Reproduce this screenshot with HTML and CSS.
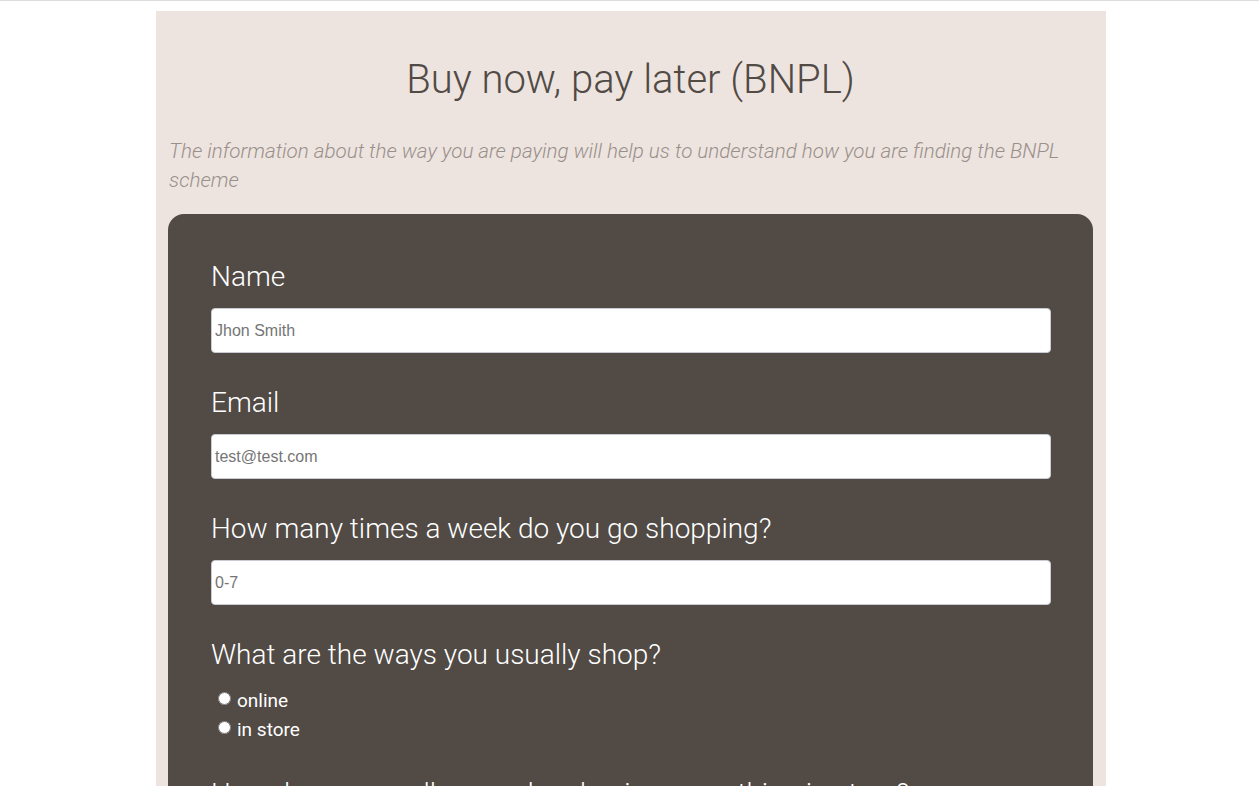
FILE: index.html
```html
<!DOCTYPE html>
<html lang="en">
<head>
<meta charset="utf-8">
<title>Buy now, pay later (BNPL)</title>
<link rel="stylesheet" href="styles.css">
</head>
<body>
<div class="topline"></div>
<main class="container">
  <h1 class="title">Buy now, pay later (BNPL)</h1>
  <p class="description">The information about the way you are paying will help us to understand how you are finding the BNPL scheme</p>
  <form class="survey">
    <div class="field">
      <label class="label" for="name">Name</label>
      <input class="input" id="name" type="text" placeholder="Jhon Smith">
    </div>
    <div class="field">
      <label class="label" for="email">Email</label>
      <input class="input" id="email" type="email" placeholder="test@test.com">
    </div>
    <div class="field">
      <label class="label" for="times">How many times a week do you go shopping?</label>
      <input class="input" id="times" type="number" placeholder="0-7">
    </div>
    <div class="field">
      <p class="label">What are the ways you usually shop?</p>
      <div class="options">
        <label class="option"><input type="radio" name="ways" class="radio">online</label>
        <label class="option"><input type="radio" name="ways" class="radio">in store</label>
      </div>
    </div>
    <div class="field">
      <p class="label">How do you usually pay when buying something in store?</p>
    </div>
  </form>
</main>
</body>
</html>
```
FILE: styles.css
```css
html, body {
  margin: 0;
  padding: 0;
  background: #ffffff;
}
body {
  font-family: Roboto, "Liberation Sans", sans-serif;
  padding-left: 3px;
}
.topline {
  height: 1px;
  background: #dddddd;
  margin-left: -3px;
}
.container {
  max-width: 950px;
  margin: 10px auto 0;
  background: #ede4df;
  padding: 12px 13px 40px 12px;
  box-sizing: border-box;
}
.title {
  margin: 33px 0 0;
  text-align: center;
  font-weight: 300;
  font-size: 40px;
  line-height: 48px;
  color: #514a45;
}
.description {
  margin: 33px 0 0 1px;
  font-style: italic;
  font-weight: 300;
  font-size: 20.6px;
  line-height: 29px;
  color: #99908b;
}
.survey {
  margin-top: 19px;
  background: #514a45;
  border-radius: 16px;
  padding: 38px 42px 40px 43px;
  color: #ffffff;
}
.field {
  margin-bottom: 25px;
}
.label {
  display: block;
  margin: 0 0 9px;
  padding-top: 3px;
  font-weight: 300;
  font-size: 28px;
  line-height: 44px;
}
.input {
  display: block;
  width: 100%;
  box-sizing: border-box;
  height: 45px;
  border: 1px solid #c9ccd3;
  border-radius: 4px;
  background: #ffffff;
  padding: 0 3px;
  font-family: "Liberation Sans", Arial, sans-serif;
  font-size: 16px;
  color: #333;
}
.input::placeholder {
  color: #757575;
}
.options {
  display: flex;
  flex-direction: column;
  padding-left: 5px;
  margin-top: 1px;
}
.option {
  display: flex;
  align-items: center;
  font-size: 19px;
  font-weight: 400;
  line-height: 29px;
}
.radio {
  margin: 0 6px 4px 2px;
  width: 13px;
  height: 13px;
}
```
